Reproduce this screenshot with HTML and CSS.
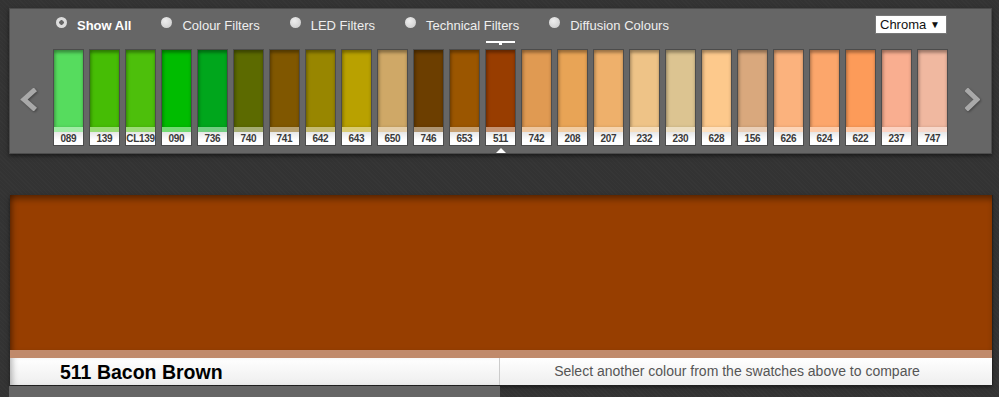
FILE: index.html
```html
<!DOCTYPE html>
<html lang="en">
<head>
    <meta charset="UTF-8">
    <meta name="viewport" content="width=device-width, initial-scale=1.0">
    <title>Swatch Compare</title>
    <link rel="stylesheet" href="styles.css">
</head>
<body>
<div class="picker">
    <div class="filters">
        <label class="filter active"><span class="radio"></span>Show All</label>
        <label class="filter"><span class="radio"></span>Colour Filters</label>
        <label class="filter"><span class="radio"></span>LED Filters</label>
        <label class="filter"><span class="radio"></span>Technical Filters</label>
        <label class="filter"><span class="radio"></span>Diffusion Colours</label>
        <div class="sort-select">Chroma <span class="caret">&#9660;</span></div>
    </div>

    <div class="carousel">
        <div class="arrow arrow-left">
            <svg width="17" height="23" viewBox="0 0 17 23"><polyline points="13.5,3 4,11.5 13.5,20" fill="none" stroke="#a9a9a9" stroke-width="5" stroke-linecap="square"/></svg>
        </div>
        <div class="swatches">
            <div class="swatch" style="--c:#56dc5e"><span class="chip"></span><span class="code">089</span></div>
            <div class="swatch" style="--c:#46bd05"><span class="chip"></span><span class="code">139</span></div>
            <div class="swatch" style="--c:#4dbf0b"><span class="chip"></span><span class="code">CL139</span></div>
            <div class="swatch" style="--c:#00bc00"><span class="chip"></span><span class="code">090</span></div>
            <div class="swatch" style="--c:#00a61c"><span class="chip"></span><span class="code">736</span></div>
            <div class="swatch" style="--c:#5c6a00"><span class="chip"></span><span class="code">740</span></div>
            <div class="swatch" style="--c:#805700"><span class="chip"></span><span class="code">741</span></div>
            <div class="swatch" style="--c:#988600"><span class="chip"></span><span class="code">642</span></div>
            <div class="swatch" style="--c:#b9a100"><span class="chip"></span><span class="code">643</span></div>
            <div class="swatch" style="--c:#cfa867"><span class="chip"></span><span class="code">650</span></div>
            <div class="swatch" style="--c:#6c3e00"><span class="chip"></span><span class="code">746</span></div>
            <div class="swatch" style="--c:#9b5600"><span class="chip"></span><span class="code">653</span></div>
            <div class="swatch active" style="--c:#983d00"><span class="chip"></span><span class="code">511</span></div>
            <div class="swatch" style="--c:#e09a52"><span class="chip"></span><span class="code">742</span></div>
            <div class="swatch" style="--c:#e8a456"><span class="chip"></span><span class="code">208</span></div>
            <div class="swatch" style="--c:#eeb06b"><span class="chip"></span><span class="code">207</span></div>
            <div class="swatch" style="--c:#eec387"><span class="chip"></span><span class="code">232</span></div>
            <div class="swatch" style="--c:#dcc491"><span class="chip"></span><span class="code">230</span></div>
            <div class="swatch" style="--c:#fdc98c"><span class="chip"></span><span class="code">628</span></div>
            <div class="swatch" style="--c:#d9a87d"><span class="chip"></span><span class="code">156</span></div>
            <div class="swatch" style="--c:#fbb27d"><span class="chip"></span><span class="code">626</span></div>
            <div class="swatch" style="--c:#fca66b"><span class="chip"></span><span class="code">624</span></div>
            <div class="swatch" style="--c:#fd9b59"><span class="chip"></span><span class="code">622</span></div>
            <div class="swatch" style="--c:#f9ae90"><span class="chip"></span><span class="code">237</span></div>
            <div class="swatch" style="--c:#f0b8a0"><span class="chip"></span><span class="code">747</span></div>
        </div>
        <div class="arrow arrow-right">
            <svg width="15" height="23" viewBox="0 0 15 23"><polyline points="3,3 12,11.5 3,20" fill="none" stroke="#a9a9a9" stroke-width="5" stroke-linecap="square"/></svg>
        </div>
    </div>
</div>

<div class="compare">
    <div class="compare-colour"></div>
    <div class="compare-tint"></div>
    <div class="compare-bar">
        <div class="compare-name">511 Bacon Brown</div>
        <div class="compare-hint">Select another colour from the swatches above to compare</div>
    </div>
</div>
<div class="next-panel"></div>
</body>
</html>
```

FILE: styles.css
```css
body {
    font-family: 'Liberation Sans', Arial, sans-serif;
    margin: 0;
    padding: 0;
    background-color: #333;
    background-image: repeating-linear-gradient(45deg, rgba(255,255,255,0.015) 0 1px, transparent 1px 3px);
    height: 397px;
    overflow: hidden;
}

/* top swatch picker */
.picker {
    margin: 8px 0 0 9px;
    width: 981px;
    height: 144px;
    background: #666;
    border: 1px solid #4c4c4c;
    box-shadow: 0 2px 4px rgba(0, 0, 0, 0.5);
}

.filters {
    display: flex;
    align-items: center;
    height: 32px;
    padding-left: 46px;
    gap: 30px;
}

.filter {
    display: flex;
    align-items: center;
    color: #eee;
    font-size: 13px;
    cursor: pointer;
}

.filter.active {
    font-weight: bold;
    color: #fff;
}

.radio {
    width: 11px;
    height: 11px;
    border-radius: 50%;
    background: radial-gradient(circle at 40% 35%, #eee, #c8c8c8);
    margin-right: 10px;
    margin-top: -5px;
    box-sizing: border-box;
}

.filter.active .radio {
    background: radial-gradient(circle, #666 0 2px, #ddd 2.5px);
}

.sort-select {
    margin-left: auto;
    margin-right: 44px;
    margin-top: -2px;
    width: 72px;
    height: 19px;
    box-sizing: border-box;
    background: #fff;
    border: 1px solid #777;
    font-size: 13px;
    color: #111;
    padding-left: 4px;
    line-height: 17px;
    display: flex;
    justify-content: space-between;
    padding-right: 6px;
}

.caret {
    font-size: 10px;
}

.carousel {
    display: flex;
    align-items: center;
    margin-top: 9px;
}

.arrow {
    display: flex;
    filter: drop-shadow(1px 1px 1px rgba(0, 0, 0, 0.35));
}

.arrow-left {
    margin-left: 10px;
    margin-right: 17px;
    margin-top: 3px;
}

.arrow-right {
    margin-left: 18px;
    margin-top: 3px;
}

.swatches {
    display: flex;
    gap: 7px;
}

.swatch {
    position: relative;
    width: 29px;
    height: 95px;
    display: flex;
    flex-direction: column;
    box-shadow: 0 0 0 1px rgba(0, 0, 0, 0.25);
}

.chip {
    flex: 1;
    background: var(--c);
    box-shadow: inset 0 3px 3px rgba(0, 0, 0, 0.3), inset 2px 0 3px rgba(0, 0, 0, 0.15);
}

.code {
    height: 13px;
    border-top: 5px solid color-mix(in srgb, var(--c) 55%, #fff);
    background: linear-gradient(#e6e6e6, #fff 60%);
    font-size: 10px;
    font-weight: bold;
    color: #3a3a3a;
    text-align: center;
    line-height: 13px;
    letter-spacing: -0.3px;
    overflow: hidden;
    white-space: nowrap;
}

.swatch.active::before {
    content: '';
    position: absolute;
    left: 0;
    right: 0;
    top: -9px;
    height: 2px;
    background: #fff;
}

.swatch.active .chip::before {
    content: '';
    position: absolute;
    left: 13px;
    top: -8px;
    width: 3px;
    height: 3px;
    background: #fff;
}

.swatch.active::after {
    content: '';
    position: absolute;
    left: 10px;
    bottom: -8px;
    border-left: 5px solid transparent;
    border-right: 5px solid transparent;
    border-bottom: 5px solid #fff;
}

/* comparison area */
.compare {
    margin: 41px 0 0 10px;
    width: 982px;
    box-shadow: 1px 0 0 #222, 0 2px 4px rgba(0, 0, 0, 0.5);
}

.compare-colour {
    height: 155px;
    background: #973e00;
    box-shadow: inset 0 6px 6px -2px rgba(0, 0, 0, 0.4), inset 6px 0 6px -4px rgba(0, 0, 0, 0.35);
}

.compare-tint {
    height: 8px;
    background: #c08a6b;
}

.compare-bar {
    display: flex;
    height: 27px;
    background: linear-gradient(#fff, #eee);
}

.compare-name {
    width: 490px;
    box-sizing: border-box;
    padding-left: 50px;
    font-size: 19.5px;
    font-weight: bold;
    color: #000;
    line-height: 28px;
    border-right: 1px solid #ccc;
    box-shadow: inset 6px 0 6px -4px rgba(0, 0, 0, 0.3);
}

.compare-hint {
    flex: 1;
    text-align: center;
    font-size: 14px;
    color: #555;
    line-height: 27px;
    padding-right: 18px;
}

.next-panel {
    margin: 1px 0 0 9px;
    width: 491px;
    height: 20px;
    background: #666;
}
```
